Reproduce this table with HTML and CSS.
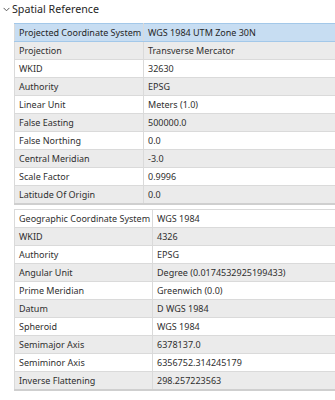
FILE: index.html
```html
<!DOCTYPE html>
<html>
<head>
<meta charset="utf-8">
<link rel="stylesheet" href="styles.css">
</head>
<body>
<div class="section">
  <div class="heading">
    <svg class="chev" width="7" height="5" viewBox="0 0 7 5"><path d="M0.6 0.9 L3.5 3.8 L6.4 0.9" fill="none" stroke="#5a5a5a" stroke-width="1"/></svg>
    <span>Spatial Reference</span>
  </div>
  <div class="tables">
    <table class="grid">
      <colgroup><col class="c1 pcs"><col></colgroup>
      <tr class="sel"><td>Projected Coordinate System</td><td>WGS 1984 UTM Zone 30N</td></tr>
      <tr class="alt"><td>Projection</td><td>Transverse Mercator</td></tr>
      <tr><td>WKID</td><td>32630</td></tr>
      <tr class="alt"><td>Authority</td><td>EPSG</td></tr>
      <tr><td>Linear Unit</td><td>Meters (1.0)</td></tr>
      <tr class="alt"><td>False Easting</td><td>500000.0</td></tr>
      <tr><td>False Northing</td><td>0.0</td></tr>
      <tr class="alt"><td>Central Meridian</td><td>-3.0</td></tr>
      <tr><td>Scale Factor</td><td>0.9996</td></tr>
      <tr class="alt"><td>Latitude Of Origin</td><td>0.0</td></tr>
    </table>
    <table class="grid">
      <colgroup><col class="c1 gcs"><col></colgroup>
      <tr><td>Geographic Coordinate System</td><td>WGS 1984</td></tr>
      <tr class="alt"><td>WKID</td><td>4326</td></tr>
      <tr><td>Authority</td><td>EPSG</td></tr>
      <tr class="alt"><td>Angular Unit</td><td>Degree (0.0174532925199433)</td></tr>
      <tr><td>Prime Meridian</td><td>Greenwich (0.0)</td></tr>
      <tr class="alt"><td>Datum</td><td>D WGS 1984</td></tr>
      <tr><td>Spheroid</td><td>WGS 1984</td></tr>
      <tr class="alt"><td>Semimajor Axis</td><td>6378137.0</td></tr>
      <tr><td>Semiminor Axis</td><td>6356752.314245179</td></tr>
      <tr class="alt"><td>Inverse Flattening</td><td>298.257223563</td></tr>
    </table>
  </div>
</div>
</body>
</html>
```
FILE: styles.css
```css
html, body {
  margin: 0;
  padding: 0;
  background: #ffffff;
}
body {
  font-family: "Noto Sans", "Open Sans", sans-serif;
  color: #2f2f2f;
  width: 335px;
  height: 400px;
  overflow: hidden;
}
.heading {
  display: flex;
  align-items: center;
  gap: 2px;
  height: 18px;
  padding-left: 3px;
  font-size: 10.7px;
  color: #262626;
}
.chev {
  margin-top: 1px;
}
.tables {
  display: flex;
  flex-direction: column;
  gap: 4px;
  padding: 5px 0 0 14px;
}
.grid {
  border-collapse: collapse;
  table-layout: fixed;
  width: 325px;
  font-size: 9px;
  border-bottom: 2px solid #cfcfcf;
}
.grid col.pcs {
  width: 129px;
}
.grid col.gcs {
  width: 138px;
}
.grid td {
  height: 17px;
  padding: 0 0 0 4px;
  border: 1px solid #dadada;
  white-space: nowrap;
  overflow: hidden;
  line-height: 17px;
}
.grid tr.alt td {
  background: #ebebeb;
}
.grid tr.sel td {
  background: #c7ddf2;
  border-top: 1px solid #a3c8e9;
  border-bottom: 1px solid #a3c8e9;
  color: #262626;
}
```
